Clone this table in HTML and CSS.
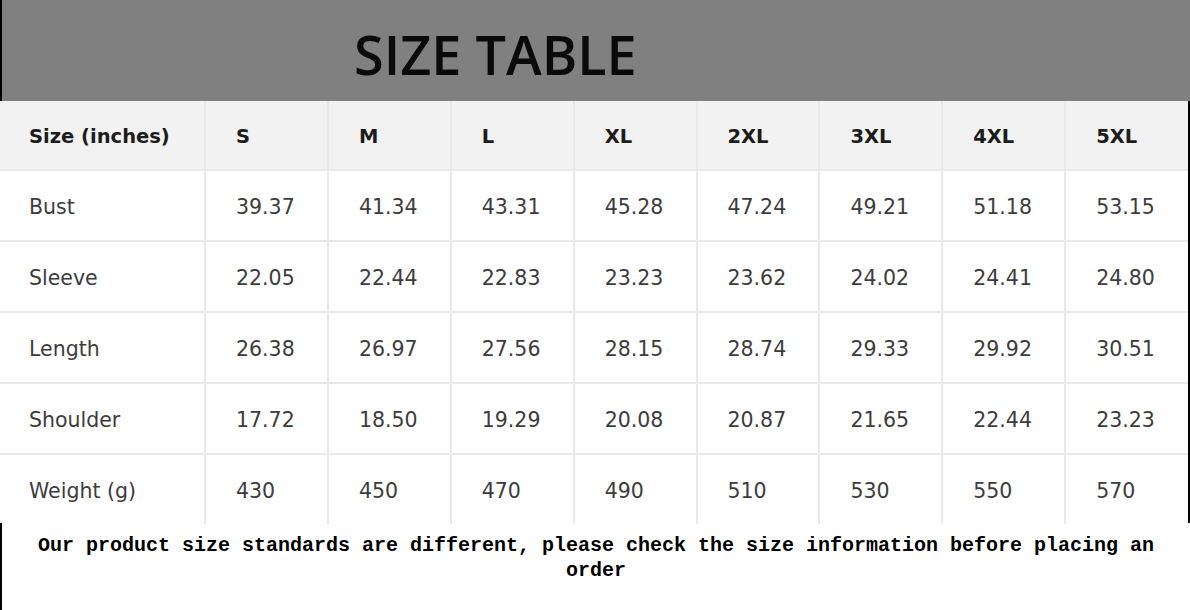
FILE: index.html
```html
<!DOCTYPE html>
<html>
<head>
<meta charset="utf-8">
<link rel="stylesheet" href="styles.css">
</head>
<body>
<div class="page">
  <header class="banner">
    <h1 class="title">SIZE TABLE</h1>
  </header>
  <div class="table-wrap">
    <table class="sizes">
      <colgroup>
        <col class="c-first"><col><col><col><col><col><col><col><col>
      </colgroup>
      <thead>
        <tr><th>Size (inches)</th><th>S</th><th>M</th><th>L</th><th>XL</th><th>2XL</th><th>3XL</th><th>4XL</th><th>5XL</th></tr>
      </thead>
      <tbody>
        <tr><td>Bust</td><td>39.37</td><td>41.34</td><td>43.31</td><td>45.28</td><td>47.24</td><td>49.21</td><td>51.18</td><td>53.15</td></tr>
        <tr><td>Sleeve</td><td>22.05</td><td>22.44</td><td>22.83</td><td>23.23</td><td>23.62</td><td>24.02</td><td>24.41</td><td>24.80</td></tr>
        <tr><td>Length</td><td>26.38</td><td>26.97</td><td>27.56</td><td>28.15</td><td>28.74</td><td>29.33</td><td>29.92</td><td>30.51</td></tr>
        <tr><td>Shoulder</td><td>17.72</td><td>18.50</td><td>19.29</td><td>20.08</td><td>20.87</td><td>21.65</td><td>22.44</td><td>23.23</td></tr>
        <tr><td>Weight (g)</td><td>430</td><td>450</td><td>470</td><td>490</td><td>510</td><td>530</td><td>550</td><td>570</td></tr>
      </tbody>
    </table>
  </div>
  <footer class="note">
    <p>Our product size standards are different, please check the size information before placing an order</p>
  </footer>
</div>
</body>
</html>
```
FILE: styles.css
```css
html, body {
  margin: 0;
  padding: 0;
  background: #ffffff;
}
.page {
  width: 1190px;
  height: 610px;
  overflow: hidden;
}
.banner {
  height: 101px;
  background: #808080;
  border-left: 2px solid #000;
  box-sizing: border-box;
  display: flex;
  align-items: center;
  padding-left: 352px;
}
.title {
  margin: 6px 0 0 0;
  font-family: "Open Sans", sans-serif;
  font-weight: 600;
  font-size: 54px;
  line-height: 1;
  color: #0a0a0a;
  letter-spacing: 0;
}
.table-wrap {
  border-right: 2px solid #000;
  height: 422px;
  box-sizing: border-box;
}
.sizes {
  width: 1188px;
  border-collapse: collapse;
  table-layout: fixed;
  font-family: "DejaVu Sans", sans-serif;
  font-size: 20.5px;
}
.c-first { width: 205px; }
.sizes th, .sizes td {
  text-align: left;
  padding: 2px 0 0 30px;
  border-left: 2px solid #e9e9e9;
  border-bottom: 2px solid #e9e9e9;
  white-space: nowrap;
}
.sizes th:first-child, .sizes td:first-child {
  border-left: none;
  padding-left: 29px;
}
.sizes th {
  height: 66px;
  background: #f2f2f2;
  color: #1c1c1c;
  font-weight: 700;
  font-size: 19.5px;
}
.sizes td {
  height: 67px;
  color: #3c3c3c;
  font-weight: 400;
}
.sizes tbody tr:last-child td {
  border-bottom: none;
}
.note {
  border-left: 2px solid #000;
  height: 87px;
  box-sizing: border-box;
  padding: 10px 30px 0 30px;
}
.note p {
  margin: 0;
  text-align: center;
  font-family: "Liberation Mono", monospace;
  font-weight: 700;
  font-size: 20px;
  line-height: 25px;
  color: #000;
}
```
